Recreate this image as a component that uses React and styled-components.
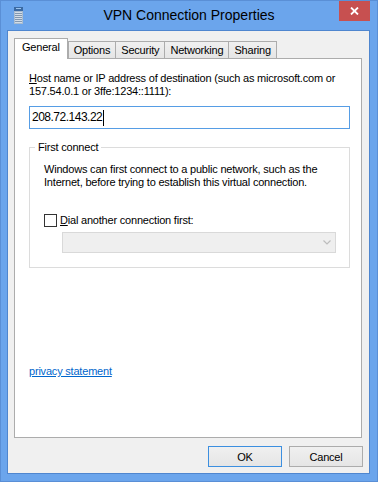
import React from "react";
import styled, { createGlobalStyle } from "styled-components";

const Global = createGlobalStyle`
  html, body { margin: 0; padding: 0; background: #fff; }
  body { font-family: "Liberation Sans", Arial, sans-serif; }
  * { box-sizing: border-box; }
`;

const Window = styled.div`
  width: 378px;
  height: 482px;
  border: 1px solid #5a8fd6;
  background: #6ba5ec;
  display: flex;
  flex-direction: column;
`;

const TitleBar = styled.div`
  height: 29px;
  display: grid;
  grid-template-columns: 1fr auto 1fr;
  align-items: start;
`;

const AppIcon = styled.svg`
  justify-self: start;
  margin: 6px 0 0 13px;
  display: block;
`;

const Title = styled.div`
  padding-top: 6px;
  font-size: 14px;
  line-height: 16px;
  color: #000;
  white-space: nowrap;
`;

const CloseButton = styled.div`
  justify-self: end;
  width: 31px;
  height: 20px;
  margin-right: 7px;
  background: #c75050;
  display: flex;
  align-items: center;
  justify-content: center;
`;

const FrameBody = styled.div`
  flex: 1;
  display: flex;
  flex-direction: column;
  padding: 0 7px 7px 6px;
`;

const Client = styled.div`
  flex: 1;
  border: 1px solid #4f86cf;
  background: #f0f0f0;
  display: flex;
  flex-direction: column;
  padding: 7px 7px 6px 6px;
  font-size: 11px;
  line-height: 13px;
  letter-spacing: -0.2px;
  color: #000;
`;

const TabStrip = styled.div`
  display: flex;
  align-items: flex-end;
  height: 20px;
`;

const Tab = styled.div`
  position: relative;
  z-index: ${(p) => (p.$active ? 1 : 0)};
  height: ${(p) => (p.$active ? 21 : 17)}px;
  margin-bottom: ${(p) => (p.$active ? -1 : 0)}px;
  padding: ${(p) => (p.$active ? "2px 7px 0" : "0 5px")};
  border: 1px solid #acacac;
  border-bottom: none;
  margin-left: ${(p) => (p.$first ? 0 : -1)}px;
  background: ${(p) => (p.$active ? "#fff" : "linear-gradient(#f0f0f0, #e5e5e5)")};
  display: flex;
  align-items: ${(p) => (p.$active ? "flex-start" : "center")};
  white-space: nowrap;
`;

const Panel = styled.div`
  height: 380px;
  border: 1px solid #acacac;
  background: #fff;
  padding: 13px 11px 0 14px;
  display: flex;
  flex-direction: column;
`;

const Label = styled.p`
  margin: 0;
`;

const TextBox = styled.div`
  margin-top: 8px;
  height: 23px;
  border: 1px solid #569de5;
  padding: 0 2px;
  display: flex;
  align-items: center;
  font-size: 12px;
  letter-spacing: -0.5px;
`;

const Caret = styled.span`
  display: inline-block;
  width: 1px;
  height: 16px;
  background: #000;
  margin-left: 1px;
`;

const GroupBox = styled.fieldset`
  margin: 12px 0 0;
  padding: 9px 13px 14px 14px;
  border: 1px solid #dcdcdc;
  min-width: 0;
`;

const Legend = styled.legend`
  padding: 0 3px;
  margin-left: -9px;
  line-height: 13px;
`;

const CheckRow = styled.div`
  margin-top: 25px;
  height: 13px;
  display: flex;
  align-items: center;
  gap: 3px;
`;

const CheckBox = styled.span`
  width: 13px;
  height: 13px;
  border: 1px solid #333;
  background: #fff;
  flex: none;
`;

const Select = styled.div`
  margin: 5px 0 0 18px;
  height: 21px;
  border: 1px solid #d9d9d9;
  background: #efefef;
  display: flex;
  align-items: center;
  justify-content: flex-end;
  padding-right: 4px;
`;

const PrivacyLink = styled.a`
  margin-top: 97px;
  align-self: flex-start;
  color: #0066cc;
  text-decoration: underline;
  cursor: pointer;
`;

const ButtonRow = styled.div`
  margin-top: 8px;
  margin-right: -1px;
  display: flex;
  justify-content: flex-end;
  gap: 7px;
`;

const Button = styled.button`
  width: 74px;
  height: 21px;
  padding: 0;
  border: 1px solid ${(p) => (p.$default ? "#3c8fe0" : "#acacac")};
  background: linear-gradient(#f0f0f0, #e5e5e5);
  font-family: inherit;
  font-size: 11px;
  letter-spacing: -0.2px;
  color: #000;
`;

const tabs = ["General", "Options", "Security", "Networking", "Sharing"];

export default function App() {
  return (
    <>
      <Global />
      <Window>
        <TitleBar>
          <AppIcon width="9" height="17" viewBox="0 0 9 17">
            <rect x="0" y="0" width="9" height="17" fill="#a9bccf" />
            <rect x="0" y="0" width="9" height="4" fill="#3b6aa3" />
            <rect x="2" y="1" width="5" height="1" fill="#9cc3ec" />
            <rect x="1" y="5" width="7" height="11" fill="#d3dde8" />
            {[6, 8, 10, 12, 14].map((y) => (
              <rect key={y} x="1" y={y} width="7" height="1" fill="#8298b0" />
            ))}
          </AppIcon>
          <Title>VPN Connection Properties</Title>
          <CloseButton>
            <svg width="9" height="8" viewBox="0 0 9 8">
              <path d="M1 0.5 L8 7.5 M8 0.5 L1 7.5" stroke="#fff" strokeWidth="1.8" />
            </svg>
          </CloseButton>
        </TitleBar>
        <FrameBody>
          <Client>
            <TabStrip>
              {tabs.map((t, i) => (
                <Tab key={t} $active={i === 0} $first={i === 0 || i === 1}>
                  {t}
                </Tab>
              ))}
            </TabStrip>
            <Panel>
              <Label>
                <u>H</u>ost name or IP address of destination (such as microsoft.com or
                <br />
                157.54.0.1 or 3ffe:1234::1111):
              </Label>
              <TextBox>
                208.72.143.22
                <Caret />
              </TextBox>
              <GroupBox>
                <Legend>First connect</Legend>
                <Label>
                  Windows can first connect to a public network, such as the
                  <br />
                  Internet, before trying to establish this virtual connection.
                </Label>
                <CheckRow>
                  <CheckBox />
                  <span>
                    <u>D</u>ial another connection first:
                  </span>
                </CheckRow>
                <Select>
                  <svg width="8" height="5" viewBox="0 0 8 5">
                    <path d="M0.5 0.5 L4 4 L7.5 0.5" stroke="#bdbdbd" strokeWidth="1.2" fill="none" />
                  </svg>
                </Select>
              </GroupBox>
              <PrivacyLink>privacy statement</PrivacyLink>
            </Panel>
            <ButtonRow>
              <Button $default>OK</Button>
              <Button>Cancel</Button>
            </ButtonRow>
          </Client>
        </FrameBody>
      </Window>
    </>
  );
}
